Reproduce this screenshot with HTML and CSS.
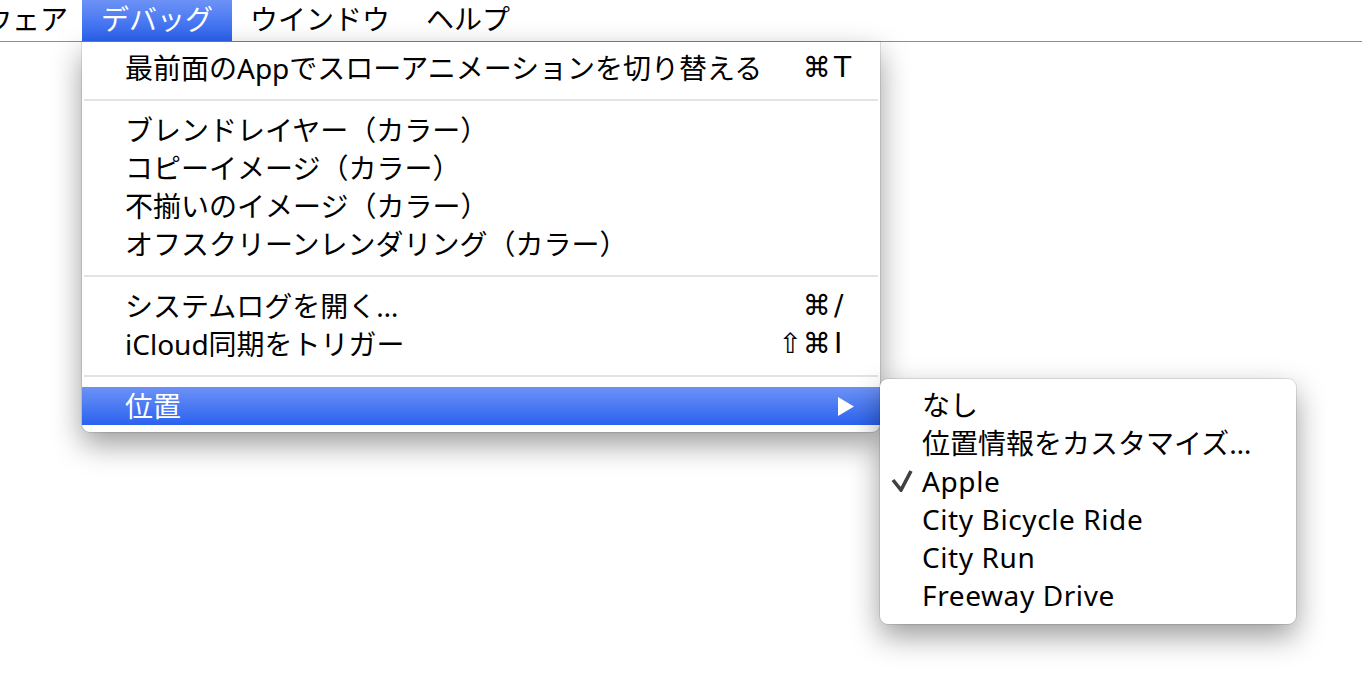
FILE: index.html
```html
<!DOCTYPE html>
<html lang="ja">
<head>
  <meta charset="UTF-8">
  <title>デバッグ メニュー</title>
  <link rel="stylesheet" href="styles.css">
</head>
<body>
  <div class="menubar">
    <div class="bar-item first">ウェア</div>
    <div class="bar-item active">デバッグ</div>
    <div class="bar-item">ウインドウ</div>
    <div class="bar-item">ヘルプ</div>
  </div>

  <div class="menu main-menu">
    <div class="item">
      <span>最前面のAppでスローアニメーションを切り替える</span>
      <span class="shortcut"><span class="mods">⌘</span><span class="key">T</span></span>
    </div>
    <div class="sep"></div>
    <div class="item"><span>ブレンドレイヤー（カラー）</span></div>
    <div class="item"><span>コピーイメージ（カラー）</span></div>
    <div class="item"><span>不揃いのイメージ（カラー）</span></div>
    <div class="item"><span>オフスクリーンレンダリング（カラー）</span></div>
    <div class="sep"></div>
    <div class="item">
      <span>システムログを開く…</span>
      <span class="shortcut"><span class="mods">⌘</span><span class="key">/</span></span>
    </div>
    <div class="item">
      <span>iCloud同期をトリガー</span>
      <span class="shortcut"><span class="mods">⇧⌘</span><span class="key">I</span></span>
    </div>
    <div class="sep"></div>
    <div class="item selected">
      <span>位置</span>
      <svg class="arrow" width="16" height="19" viewBox="0 0 16 19"><polygon points="0,0 16,9.5 0,19" fill="#fff"/></svg>
    </div>
  </div>

  <div class="menu sub-menu">
    <div class="sub-item"><span class="check"></span>なし</div>
    <div class="sub-item"><span class="check"></span>位置情報をカスタマイズ…</div>
    <div class="sub-item latin">
      <span class="check">
        <svg width="22" height="22" viewBox="0 0 22 22"><path d="M2 10 L10 20 L20 1" fill="none" stroke="#404040" stroke-width="3.6"/></svg>
      </span>Apple
    </div>
    <div class="sub-item latin"><span class="check"></span>City Bicycle Ride</div>
    <div class="sub-item latin"><span class="check"></span>City Run</div>
    <div class="sub-item latin"><span class="check"></span>Freeway Drive</div>
  </div>
</body>
</html>
```

FILE: styles.css
```css
body {
  margin: 0;
  background: #fff;
  color: #000;
  font-family: "Noto Sans", "Noto Sans CJK JP", "DejaVu Sans", sans-serif;
  font-size: 28px;
  overflow: hidden;
  height: 688px;
}

.menubar {
  display: flex;
  height: 41px;
  border-bottom: 1px solid #8e8e8e;
  background: #fff;
}

.bar-item {
  padding: 0 18px;
  line-height: 38px;
}

.bar-item.first {
  padding: 0 14px 0 0;
  margin-left: -16px;
}

.bar-item.active {
  padding: 0 19px;
  color: #fff;
  background: linear-gradient(#6d92f6, #2a62ef);
}

.menu {
  position: absolute;
  background: #fff;
  box-shadow: 0 12px 30px rgba(0, 0, 0, 0.4), 0 0 0 1px rgba(0, 0, 0, 0.1);
}

.main-menu {
  top: 42px;
  left: 82px;
  width: 798px;
  padding: 7px 0;
  border-radius: 0 0 8px 8px;
}

.item {
  display: flex;
  justify-content: space-between;
  align-items: center;
  height: 38px;
  line-height: 38px;
  padding: 0 29px 0 43px;
  white-space: nowrap;
}

.item.selected {
  margin-top: 1px;
  color: #fff;
  background: linear-gradient(#6d92f6, #2a62ef);
}

.arrow {
  margin-right: -3px;
}

.shortcut {
  display: flex;
  font-family: "DejaVu Sans", sans-serif;
  font-size: 28px;
}

.mods {
  text-align: right;
  letter-spacing: 1px;
}

.key {
  width: 17px;
  padding-left: 2px;
}

.sep {
  height: 2px;
  margin: 12px 2px 10px;
  background: #e3e3e3;
}

.sub-menu {
  top: 379px;
  left: 880px;
  width: 416px;
  padding: 7px 0 10px;
  border-radius: 8px;
}

.sub-item {
  display: flex;
  align-items: center;
  height: 38px;
  line-height: 38px;
  white-space: nowrap;
}

.sub-item.latin {
  letter-spacing: 0.6px;
}

.check {
  display: flex;
  align-items: center;
  width: 31px;
  height: 38px;
  padding-left: 11px;
}
```
